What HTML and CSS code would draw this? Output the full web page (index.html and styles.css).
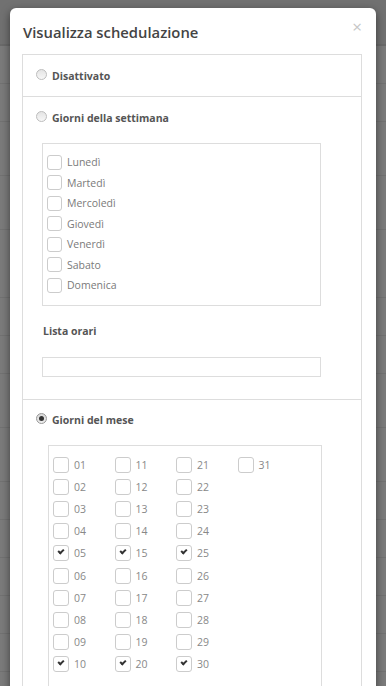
FILE: index.html
```html
<!DOCTYPE html>
<html lang="it">
<head>
    <meta charset="UTF-8">
    <meta name="viewport" content="width=device-width, initial-scale=1.0">
    <title>Visualizza schedulazione</title>
    <link rel="stylesheet" href="styles.css">
</head>
<body>

    <!-- Page behind the dialog (dimmed) -->
    <div class="backdrop">
        <div class="bg-head"></div>
        <div class="bg-row"></div>
        <div class="bg-row"></div>
        <div class="bg-row tall"></div>
        <div class="bg-row tall"></div>
        <div class="bg-row xtall"></div>
        <div class="bg-row"></div>
        <div class="bg-row"></div>
        <div class="bg-row tall"></div>
        <div class="bg-row tall"></div>
        <div class="bg-row"></div>
        <div class="bg-row"></div>
        <div class="bg-row"></div>
        <div class="bg-row"></div>
        <div class="bg-row"></div>
    </div>

    <!-- Schedule dialog -->
    <div class="modal">
        <div class="modal-header">
            <h4 class="modal-title">Visualizza schedulazione</h4>
            <span class="close">&times;</span>
        </div>

        <div class="panel">
            <div class="option">
                <label class="radio-line"><span class="radio"></span>Disattivato</label>
            </div>

            <div class="option">
                <label class="radio-line"><span class="radio"></span>Giorni della settimana</label>
                <div class="week-box">
                    <label class="check-row"><span class="check"></span>Lunedì</label>
                    <label class="check-row"><span class="check"></span>Martedì</label>
                    <label class="check-row"><span class="check"></span>Mercoledì</label>
                    <label class="check-row"><span class="check"></span>Giovedì</label>
                    <label class="check-row"><span class="check"></span>Venerdì</label>
                    <label class="check-row"><span class="check"></span>Sabato</label>
                    <label class="check-row"><span class="check"></span>Domenica</label>
                </div>
                <div class="field-label">Lista orari</div>
                <div class="text-input"></div>
            </div>

            <div class="option">
                <label class="radio-line"><span class="radio checked"></span>Giorni del mese</label>
                <div class="month-box">
                    <div class="month-grid">
                        <label class="day"><span class="check"></span>01</label>
                        <label class="day"><span class="check"></span>02</label>
                        <label class="day"><span class="check"></span>03</label>
                        <label class="day"><span class="check"></span>04</label>
                        <label class="day"><span class="check on"></span>05</label>
                        <label class="day"><span class="check"></span>06</label>
                        <label class="day"><span class="check"></span>07</label>
                        <label class="day"><span class="check"></span>08</label>
                        <label class="day"><span class="check"></span>09</label>
                        <label class="day"><span class="check on"></span>10</label>
                        <label class="day"><span class="check"></span>11</label>
                        <label class="day"><span class="check"></span>12</label>
                        <label class="day"><span class="check"></span>13</label>
                        <label class="day"><span class="check"></span>14</label>
                        <label class="day"><span class="check on"></span>15</label>
                        <label class="day"><span class="check"></span>16</label>
                        <label class="day"><span class="check"></span>17</label>
                        <label class="day"><span class="check"></span>18</label>
                        <label class="day"><span class="check"></span>19</label>
                        <label class="day"><span class="check on"></span>20</label>
                        <label class="day"><span class="check"></span>21</label>
                        <label class="day"><span class="check"></span>22</label>
                        <label class="day"><span class="check"></span>23</label>
                        <label class="day"><span class="check"></span>24</label>
                        <label class="day"><span class="check on"></span>25</label>
                        <label class="day"><span class="check"></span>26</label>
                        <label class="day"><span class="check"></span>27</label>
                        <label class="day"><span class="check"></span>28</label>
                        <label class="day"><span class="check"></span>29</label>
                        <label class="day"><span class="check on"></span>30</label>
                        <label class="day"><span class="check"></span>31</label>
                    </div>
                </div>
            </div>
        </div>
    </div>

</body>
</html>
```

FILE: styles.css
```css
/* General page */
body {
    margin: 0;
    font-family: 'Open Sans', 'Noto Sans', sans-serif;
    background-color: #7b7b7b;
    height: 686px;
    overflow: hidden;
    position: relative;
}

/* Dimmed page behind the dialog */
.backdrop {
    display: flex;
    flex-direction: column;
}

.bg-head {
    height: 44px;
    background-color: #717171;
    border-bottom: 2px solid #6a6a6a;
}

.bg-row {
    height: 37px;
    border-bottom: 1px solid #727272;
}

.bg-row.tall {
    height: 53px;
}

.bg-row.xtall {
    height: 67px;
}

/* Dialog box */
.modal {
    position: absolute;
    top: 8px;
    left: 10px;
    width: 366px;
    height: 700px;
    background-color: #fff;
    border-radius: 6px;
    box-shadow: 0 3px 9px rgba(0, 0, 0, 0.5);
}

.modal-header {
    display: flex;
    justify-content: space-between;
    align-items: flex-start;
    padding: 13px 14px 0 13px;
}

.modal-title {
    margin: 0;
    font-size: 14.8px;
    line-height: 22px;
    font-weight: 600;
    color: #444;
}

.close {
    margin-top: -4px;
    font-size: 17px;
    line-height: 20px;
    color: #c6c6c6;
}

/* Options panel */
.panel {
    margin: 11px 14px 0 12px;
    border: 1px solid #ddd;
}

.option {
    padding: 13px;
}

.option + .option {
    border-top: 1px solid #ddd;
}

.radio-line {
    display: flex;
    align-items: center;
    height: 15px;
    font-size: 10.5px;
    font-weight: 700;
    color: #555;
}

.radio {
    width: 9px;
    height: 9px;
    margin-right: 5px;
    margin-top: -3px;
    border: 1px solid #bdbdbd;
    border-radius: 50%;
    background: linear-gradient(#e4e4e4, #f7f7f7);
    position: relative;
}

.radio.checked {
    border-color: #999;
    background: linear-gradient(#d8d8d8, #eee);
}

.radio.checked::after {
    content: "";
    position: absolute;
    top: 2px;
    left: 2px;
    width: 5px;
    height: 5px;
    border-radius: 50%;
    background-color: #333;
}

/* Checkbox */
.check {
    flex: none;
    width: 13px;
    height: 13px;
    margin-right: 5px;
    border: 1px solid #ccc;
    border-radius: 3px;
    background-color: #fff;
    position: relative;
}

.check.on::after {
    content: "";
    position: absolute;
    top: 3px;
    left: 4px;
    width: 4px;
    height: 2px;
    border-left: 2px solid #333;
    border-bottom: 2px solid #333;
    transform: rotate(-45deg);
}

/* Week days */
.week-box {
    margin: 18px 0 0 6px;
    width: 273px;
    padding: 8px 0 9px 4px;
    border: 1px solid #ddd;
}

.check-row {
    display: flex;
    align-items: center;
    height: 20.5px;
    font-size: 10.5px;
    color: #7a7a7a;
}

.field-label {
    margin: 18px 0 0 7px;
    font-size: 10.5px;
    line-height: 14px;
    font-weight: 700;
    color: #555;
}

.text-input {
    margin: 19px 0 9px 6px;
    width: 277px;
    height: 18px;
    border: 1px solid #ddd;
}

/* Month days */
.month-box {
    margin: 17px 0 0 12px;
    width: 268px;
    height: 300px;
    padding: 8px 0 0 4px;
    border: 1px solid #ddd;
}

.month-grid {
    display: grid;
    grid-template-columns: repeat(4, 61.5px);
    grid-template-rows: repeat(10, 22.2px);
    grid-auto-flow: column;
}

.day {
    display: flex;
    align-items: center;
    font-size: 10.5px;
    color: #888;
}

.day .check {
    width: 14px;
    height: 14px;
}
```
